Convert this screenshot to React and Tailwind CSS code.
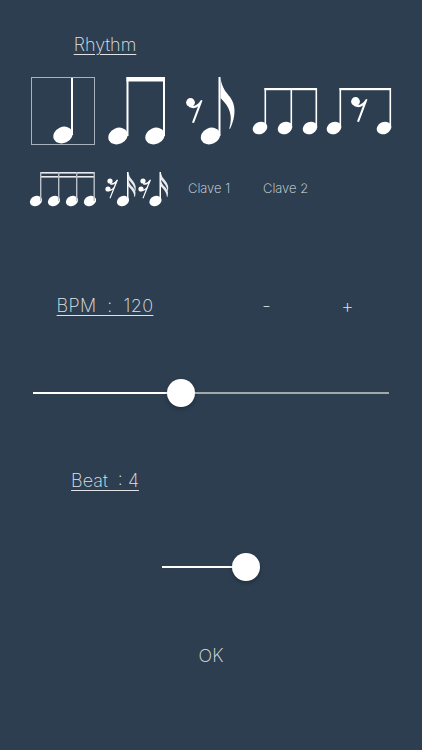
import React from "react";

// note head, page coordinates
const Head = ({ cx, cy, rx = 10, ry = 8 }) => (
  <ellipse cx={cx} cy={cy} rx={rx} ry={ry} transform={`rotate(-25 ${cx} ${cy})`} fill="#fff" />
);

const EighthRest = ({ dx = 0, dy = 0 }) => (
  <g transform={`translate(${dx} ${dy})`} fill="#fff">
    <circle cx="190.5" cy="102.5" r="4.4" />
    <path d="M189 105.5 Q196 108 201 100 L202.5 100.5 L194 123 L192 122.5 L198 106.5 Q194 109.5 189 107Z" />
  </g>
);

const SixteenthRest = ({ dx = 0 }) => (
  <g transform={`translate(${dx} 0)`} fill="#fff">
    <circle cx="110" cy="180" r="2.6" />
    <circle cx="108" cy="188" r="2.6" />
    <path d="M110 182 Q114 183 117 178.5 L118 179 L110.5 197.5 L109.5 197 L112.8 188.5 Q110.5 190.5 108 190 L108 189 Q111.5 189.5 113.8 186 L115 182.5 Q112.5 184.5 110 183.2Z" />
  </g>
);

const SixteenthNote = ({ dx = 0 }) => (
  <g transform={`translate(${dx} 0)`}>
    <Head cx={123} cy={200} rx={6.3} ry={5} />
    <rect x="127" y="171" width="1.5" height="29" fill="#fff" />
    <path d="M128 171 Q129 176 133 180 Q136.5 184 135.5 190 L135 190 Q134.5 184 128 178.5Z" fill="#e8ebee" />
    <path d="M128 178 Q129 183 133 186.5 Q136.5 190 135 196 L134.5 196 Q134 190.5 128 185Z" fill="#e8ebee" />
  </g>
);

const Slider = ({ className, left, right }) => (
  <div className={`flex items-center ${className}`}>
    <div className={`h-[2px] bg-white ${left}`} />
    <div className="w-7 h-7 rounded-full bg-white shadow-[0_2px_4px_rgba(0,0,0,0.25)] shrink-0" />
    {right && <div className={`h-[2px] bg-[#a3a8ab] ${right}`} />}
  </div>
);

const Label = ({ children, className }) => (
  <div className={`w-[210px] text-center text-[18px] leading-6 font-extralight text-[#dfe3e7] ${className}`}>
    <span className="underline underline-offset-[3px] decoration-1 whitespace-pre">{children}</span>
  </div>
);

export default function App() {
  return (
    <div
      className="w-[422px] h-[750px] overflow-hidden bg-[#2d3e50] pt-[33px]"
      style={{ fontFamily: "Inter, 'Noto Sans', sans-serif" }}
    >
      <Label>Rhythm</Label>

      {/* first row of rhythms */}
      <div className="flex items-start mt-[20px] ml-[31px] h-[68px]">
        <div className="w-[64px] h-[68px] border border-[#a9b2bb]">
          <svg width="62" height="66" viewBox="32 78 62 66" className="block">
            <Head cx={63} cy={135} />
            <rect x="71" y="78" width="2" height="57" fill="#fff" />
          </svg>
        </div>
        <svg width="63" height="68" viewBox="105 77 63 68" className="block ml-[10px]">
          <Head cx={118} cy={136} />
          <Head cx={155} cy={136} />
          <rect x="126.5" y="77" width="2" height="59" fill="#fff" />
          <rect x="163" y="77" width="2" height="59" fill="#fff" />
          <rect x="126.5" y="77" width="38.5" height="4.5" fill="#fff" />
        </svg>
        <svg width="54" height="68" viewBox="184 77 54 68" className="block ml-[16px]">
          <EighthRest />
          <Head cx={210.5} cy={136} />
          <rect x="218.5" y="77" width="2" height="59" fill="#fff" />
          <path d="M220.5 78 C222 88 226 92 230 97 C236 105 236 116 230 129 L229.3 128.5 C233 116 230 107 220.5 98Z" fill="#fff" />
        </svg>
        <svg width="70" height="68" viewBox="250 77 70 68" className="block ml-[12px]">
          <Head cx={260} cy={128} rx={7.5} ry={6} />
          <Head cx={285} cy={128} rx={7.5} ry={6} />
          <Head cx={310} cy={128} rx={7.5} ry={6} />
          <rect x="264.5" y="88" width="52.5" height="2.2" fill="#fff" />
          <rect x="264.5" y="88" width="1.6" height="40" fill="#fff" />
          <rect x="290.5" y="88" width="1.6" height="40" fill="#fff" />
          <rect x="315.5" y="88" width="1.6" height="40" fill="#fff" />
        </svg>
        <svg width="68" height="68" viewBox="325 77 68 68" className="block ml-[5px]">
          <Head cx={334} cy={128} rx={7.5} ry={6} />
          <Head cx={384} cy={128} rx={7.5} ry={6} />
          <rect x="339.5" y="88" width="51.5" height="2.2" fill="#fff" />
          <rect x="339.5" y="88" width="1.6" height="40" fill="#fff" />
          <rect x="389.5" y="88" width="1.6" height="40" fill="#fff" />
          <EighthRest dx={165} dy={-1} />
        </svg>
      </div>

      {/* second row */}
      <div className="flex items-center mt-[24px] ml-[28px] h-[40px]">
        <svg width="68" height="40" viewBox="28 168 68 40" className="block">
          <Head cx={36} cy={200} rx={6.3} ry={5} />
          <Head cx={54} cy={200} rx={6.3} ry={5} />
          <Head cx={72} cy={200} rx={6.3} ry={5} />
          <Head cx={90} cy={200} rx={6.3} ry={5} />
          <rect x="40" y="171" width="54.5" height="1.6" fill="#e8ebee" />
          <rect x="40" y="175" width="54.5" height="1.6" fill="#e8ebee" />
          <rect x="40" y="171" width="1.4" height="29" fill="#b9c0c7" />
          <rect x="58" y="171" width="1.4" height="29" fill="#b9c0c7" />
          <rect x="76" y="171" width="1.4" height="29" fill="#b9c0c7" />
          <rect x="93.5" y="171" width="1.4" height="29" fill="#b9c0c7" />
        </svg>
        <svg width="68" height="40" viewBox="104 168 68 40" className="block ml-[8px]">
          <SixteenthRest />
          <SixteenthNote />
          <SixteenthRest dx={33} />
          <SixteenthNote dx={32.5} />
        </svg>
        <span className="ml-[16px] w-[75px] text-[13px] font-extralight text-[#dfe3e7]">Clave 1</span>
        <span className="text-[13px] font-extralight text-[#dfe3e7]">Clave 2</span>
      </div>

      {/* bpm */}
      <div className="flex items-center mt-[85px] h-6">
        <Label className="tracking-[0.35px]">BPM  :  120</Label>
        <span className="w-[81px] ml-[16px] text-center text-[20px] font-extralight text-[#dfe3e7]">-</span>
        <span className="w-[81px] text-center text-[20px] font-extralight text-[#dfe3e7]">+</span>
      </div>
      <Slider className="mt-[61px] ml-[33px]" left="w-[134px]" right="w-[194px]" />

      {/* beat */}
      <Label className="mt-[62px]">Beat  : 4</Label>
      <Slider className="mt-[60px] ml-[162px]" left="w-[70px]" />

      <div className="mt-[63px] w-[422px] text-center text-[18px] leading-6 font-extralight text-[#dfe3e7]">OK</div>
    </div>
  );
}
